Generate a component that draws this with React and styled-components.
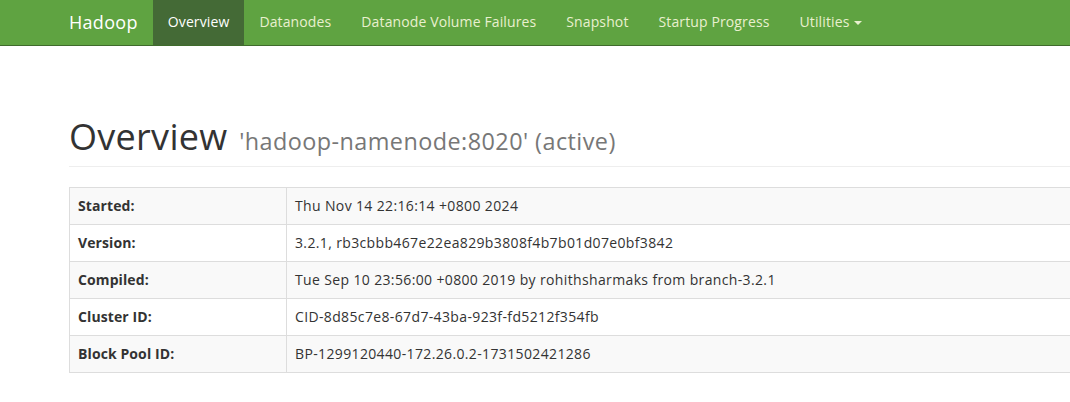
import React from 'react'
import styled, { createGlobalStyle } from 'styled-components'

const GlobalStyle = createGlobalStyle`
  html, body {
    margin: 0;
    padding: 0;
    background: #fff;
    overflow: hidden;
  }
  body {
    font-family: "Open Sans", "Noto Sans", "Liberation Sans", sans-serif;
    font-size: 14px;
    line-height: 1.42857;
    color: #333;
  }
`

const navItems = [
  { label: 'Overview', active: true },
  { label: 'Datanodes' },
  { label: 'Datanode Volume Failures' },
  { label: 'Snapshot' },
  { label: 'Startup Progress' },
  { label: 'Utilities', caret: true },
]

const rows = [
  ['Started:', 'Thu Nov 14 22:16:14 +0800 2024'],
  ['Version:', '3.2.1, rb3cbbb467e22ea829b3808f4b7b01d07e0bf3842'],
  ['Compiled:', 'Tue Sep 10 23:56:00 +0800 2019 by rohithsharmaks from branch-3.2.1'],
  ['Cluster ID:', 'CID-8d85c7e8-67d7-43ba-923f-fd5212f354fb'],
  ['Block Pool ID:', 'BP-1299120440-172.26.0.2-1731502421286'],
]

const App = () => {
  return (
    <>
      <GlobalStyle />
      <Navbar>
        <Container>
          <Brand>Hadoop</Brand>
          <NavList>
            {navItems.map((item) => (
              <NavItem key={item.label} $active={item.active}>
                {item.label}
                {item.caret && <Caret />}
              </NavItem>
            ))}
          </NavList>
        </Container>
      </Navbar>
      <Container>
        <PageHeader>
          <Title>
            Overview <small>'hadoop-namenode:8020' (active)</small>
          </Title>
        </PageHeader>
        <InfoTable>
          <tbody>
            {rows.map(([k, v], i) => (
              <Row key={k} $striped={i % 2 === 0}>
                <th>{k}</th>
                <td>{v}</td>
              </Row>
            ))}
          </tbody>
        </InfoTable>
      </Container>
    </>
  )
}

const Navbar = styled.div`
  background-color: #5fa341;
  border-bottom: 1px solid #3f6b2c;
  height: 45px;
`

const Container = styled.div`
  width: 1140px;
  padding-left: 69px;
  display: flex;
  flex-direction: column;
  ${Navbar} & {
    flex-direction: row;
    align-items: stretch;
    height: 100%;
  }
`

const Brand = styled.div`
  font-size: 18px;
  color: #fff;
  line-height: 45px;
  padding-right: 15px;
  letter-spacing: 0.3px;
`

const NavList = styled.ul`
  display: flex;
  list-style: none;
  margin: 0;
  padding: 0;
`

const NavItem = styled.li`
  display: flex;
  align-items: center;
  padding: 0 15px 2px;
  letter-spacing: 0.12px;
  color: ${(p) => (p.$active ? '#fff' : '#e9f0cf')};
  background: ${(p) => (p.$active ? '#446a36' : 'transparent')};
  white-space: nowrap;
`

const Caret = styled.span`
  display: inline-block;
  width: 0;
  height: 0;
  margin-left: 5px;
  margin-top: 2px;
  border-top: 4px solid #e9f0cf;
  border-left: 4px solid transparent;
  border-right: 4px solid transparent;
`

const PageHeader = styled.div`
  margin-top: 71px;
  padding-bottom: 9px;
  border-bottom: 1px solid #eee;
  margin-bottom: 20px;
`

const Title = styled.h1`
  margin: 0;
  font-size: 36px;
  font-weight: 400;
  line-height: 1.1;
  color: #333;
  letter-spacing: 0.3px;
  word-spacing: 2px;

  small {
    font-size: 65%;
    color: #777;
    font-weight: 400;
    letter-spacing: 0.45px;
    word-spacing: 0;
  }
`

const InfoTable = styled.table`
  width: 1140px;
  border-collapse: collapse;
  border: 1px solid #ddd;

  th, td {
    border: 1px solid #ddd;
    padding: 8px;
    line-height: 20px;
    text-align: left;
    vertical-align: top;
  }
  th {
    width: 200px;
    font-weight: 700;
    letter-spacing: 0.1px;
  }
  td {
    letter-spacing: 0.36px;
  }
`

const Row = styled.tr`
  background: ${(p) => (p.$striped ? '#f9f9f9' : '#fff')};
`

export default App
